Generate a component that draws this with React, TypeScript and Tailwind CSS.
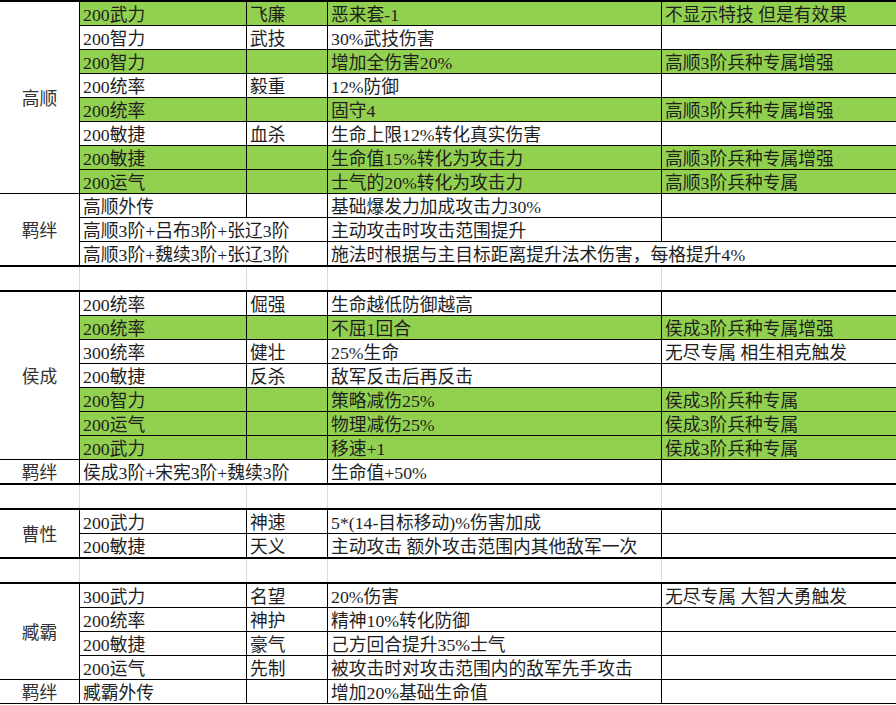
const GREEN = 'bg-[#92d050]';

type Row = {
    g?: boolean;
    b: string;
    c?: string;
    d?: string;
    e?: string;
    spanBC?: boolean;
    spanDE?: boolean;
};

type Group = { name: string; rows: Row[]; bottom: 'thin' | 'thick' };

const groups: (Group | 'sep')[] = [
    {
        name: '高顺', bottom: 'thin', rows: [
            { g: true, b: '200武力', c: '飞廉', d: '恶来套-1', e: '不显示特技 但是有效果' },
            { b: '200智力', c: '武技', d: '30%武技伤害' },
            { g: true, b: '200智力', d: '增加全伤害20%', e: '高顺3阶兵种专属增强' },
            { b: '200统率', c: '毅重', d: '12%防御' },
            { g: true, b: '200统率', d: '固守4', e: '高顺3阶兵种专属增强' },
            { b: '200敏捷', c: '血杀', d: '生命上限12%转化真实伤害' },
            { g: true, b: '200敏捷', d: '生命值15%转化为攻击力', e: '高顺3阶兵种专属增强' },
            { g: true, b: '200运气', d: '士气的20%转化为攻击力', e: '高顺3阶兵种专属' },
        ],
    },
    {
        name: '羁绊', bottom: 'thick', rows: [
            { b: '高顺外传', d: '基础爆发力加成攻击力30%' },
            { b: '高顺3阶+吕布3阶+张辽3阶', spanBC: true, d: '主动攻击时攻击范围提升' },
            { b: '高顺3阶+魏续3阶+张辽3阶', spanBC: true, d: '施法时根据与主目标距离提升法术伤害，每格提升4%', spanDE: true },
        ],
    },
    'sep',
    {
        name: '侯成', bottom: 'thin', rows: [
            { b: '200统率', c: '倔强', d: '生命越低防御越高' },
            { g: true, b: '200统率', d: '不屈1回合', e: '侯成3阶兵种专属增强' },
            { b: '300统率', c: '健壮', d: '25%生命', e: '无尽专属 相生相克触发' },
            { b: '200敏捷', c: '反杀', d: '敌军反击后再反击' },
            { g: true, b: '200智力', d: '策略减伤25%', e: '侯成3阶兵种专属' },
            { g: true, b: '200运气', d: '物理减伤25%', e: '侯成3阶兵种专属' },
            { g: true, b: '200武力', d: '移速+1', e: '侯成3阶兵种专属' },
        ],
    },
    {
        name: '羁绊', bottom: 'thick', rows: [
            { b: '侯成3阶+宋宪3阶+魏续3阶', spanBC: true, d: '生命值+50%' },
        ],
    },
    'sep',
    {
        name: '曹性', bottom: 'thick', rows: [
            { b: '200武力', c: '神速', d: '5*(14-目标移动)%伤害加成' },
            { b: '200敏捷', c: '天义', d: '主动攻击 额外攻击范围内其他敌军一次' },
        ],
    },
    'sep',
    {
        name: '臧霸', bottom: 'thin', rows: [
            { b: '300武力', c: '名望', d: '20%伤害', e: '无尽专属 大智大勇触发' },
            { b: '200统率', c: '神护', d: '精神10%转化防御' },
            { b: '200敏捷', c: '豪气', d: '己方回合提升35%士气' },
            { b: '200运气', c: '先制', d: '被攻击时对攻击范围内的敌军先手攻击' },
        ],
    },
    {
        name: '羁绊', bottom: 'thin', rows: [
            { b: '臧霸外传', d: '增加20%基础生命值' },
        ],
    },
];

function Cell({ text, className }: { text?: string; className: string }) {
    return (
        <div className={`flex items-center px-[3px] pt-[5px] whitespace-nowrap overflow-visible ${className}`}>
            {text}
        </div>
    );
}

function DataRow({ row, last }: { row: Row; last: boolean }) {
    const bg = row.g ? GREEN : 'bg-white';
    return (
        <div className={`flex ${last ? 'h-[23px]' : 'h-6 border-b border-black'}`}>
            {row.spanBC ? (
                <Cell text={row.b} className={`w-[248px] shrink-0 border-r border-black ${bg}`} />
            ) : (
                <>
                    <Cell text={row.b} className={`w-[167px] shrink-0 border-r border-black ${bg}`} />
                    <Cell text={row.c} className={`w-[81px] shrink-0 border-r border-black ${bg}`} />
                </>
            )}
            {row.spanDE ? (
                <Cell text={row.d} className={`flex-1 ${bg}`} />
            ) : (
                <>
                    <Cell text={row.d} className={`w-[334px] shrink-0 border-r border-black ${bg}`} />
                    <Cell text={row.e} className={`flex-1 ${bg}`} />
                </>
            )}
        </div>
    );
}

function GroupBlock({ group }: { group: Group }) {
    return (
        <div className={`flex ${group.bottom === 'thick' ? 'border-b-2' : 'border-b'} border-black`}>
            <div className="w-20 shrink-0 border-r border-black flex items-center justify-center text-[#333] pt-[5px]">
                {group.name}
            </div>
            <div className="flex-1 flex flex-col">
                {group.rows.map((r, i) => (
                    <DataRow key={i} row={r} last={i === group.rows.length - 1} />
                ))}
            </div>
        </div>
    );
}

function Sep() {
    return (
        <div className="flex h-[25px] border-b-2 border-black">
            <div className="w-20 shrink-0 border-r border-[#dadada]" />
            <div className="w-[167px] shrink-0 border-r border-[#dadada]" />
            <div className="w-[81px] shrink-0 border-r border-[#dadada]" />
            <div className="w-[334px] shrink-0 border-r border-[#dadada]" />
            <div className="flex-1" />
        </div>
    );
}

export default function App() {
    return (
        <div
            className="w-[896px] h-[705px] overflow-hidden bg-white text-[#1e1e1e] text-[17.75px] leading-none"
            style={{ fontFamily: "'Liberation Serif', 'Noto Sans CJK SC', serif" }}
        >
            <div className="border-t-2 border-black">
                {groups.map((g, i) => (g === 'sep' ? <Sep key={i} /> : <GroupBlock key={i} group={g} />))}
            </div>
        </div>
    );
}
